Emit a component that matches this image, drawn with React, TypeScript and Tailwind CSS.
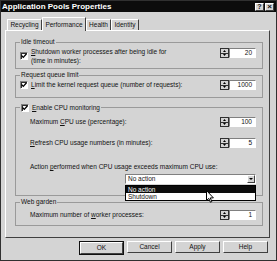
import type { ReactNode } from "react"

const raised = "border border-t-white border-l-white border-r-[#404040] border-b-[#404040]"
const sunken = "border border-t-[#808080] border-l-[#808080] border-r-white border-b-white"

const Check = () => (
    <span className={`w-[8px] h-[8px] shrink-0 bg-white flex items-center justify-center ${sunken} shadow-[inset_1px_1px_0_#303030]`}>
        <svg width="6" height="6" viewBox="0 0 6 6">
            <path d="M0.5 2.5 L2.3 4.4 L5.5 0.8" stroke="#000" strokeWidth="1.3" fill="none" />
        </svg>
    </span>
)

const Spin = ({ value, className = "" }: { value: string; className?: string }) => (
    <div className={`flex h-[10px] shrink-0 ${className}`}>
        <div className="w-[9px] flex flex-col border border-[#303030] bg-[#d4d4d4]">
            <div className="flex-1 flex items-center justify-center border-b border-[#303030]">
                <svg width="3" height="2" viewBox="0 0 3 2"><path d="M0 2 L1.5 0 L3 2Z" fill="#000" /></svg>
            </div>
            <div className="flex-1 flex items-center justify-center">
                <svg width="3" height="2" viewBox="0 0 3 2"><path d="M0 0 L1.5 2 L3 0Z" fill="#000" /></svg>
            </div>
        </div>
        <div className={`w-[27px] bg-white ${sunken} text-right pr-[3px] leading-[8px]`}>{value}</div>
    </div>
)

const Group = ({ legend, className, children }: { legend: ReactNode; className: string; children?: ReactNode }) => (
    <fieldset className={`border border-[#9a9a9a] pl-[4px] pr-[6px] w-[248px] ${className}`}>
        <legend className="px-[1px] leading-[8px]">{legend}</legend>
        {children}
    </fieldset>
)

const Btn = ({ label, primary }: { label: string; primary?: boolean }) => (
    <div className={primary ? "border border-[#101010]" : ""}>
        <div className={`${raised} h-[12px] ${primary ? "w-[43px]" : "w-[45px]"} flex items-center justify-center leading-none`}>{label}</div>
    </div>
)

export default function App() {
    return (
        <div className="w-[277px] h-[261px] bg-[#d4d4d4] border border-[#303030] flex flex-col font-['Liberation_Sans',Arial,sans-serif] text-[6.5px] text-[#111] relative overflow-hidden">
            {/* title bar */}
            <div className="h-[11px] bg-[#0c0c0c] flex items-center justify-between pl-[1px] pr-[2px]">
                <span className="text-white font-bold text-[8px] leading-none">Application Pools Properties</span>
                <div className="flex gap-[1px]">
                    <div className={`w-[9px] h-[8px] bg-[#d4d4d4] ${raised} flex items-center justify-center font-bold text-[7px] leading-none`}>?</div>
                    <div className={`w-[9px] h-[8px] bg-[#d4d4d4] ${raised} flex items-center justify-center font-bold text-[8px] leading-none`}>×</div>
                </div>
            </div>

            {/* tabs */}
            <div className="h-[18px] flex items-end pl-[6px] relative z-10">
                <div className={`w-[35px] h-[11px] ${raised} border-b-0 flex items-center justify-center`}>Recycling</div>
                <div className={`w-[44px] h-[14px] ${raised} border-b-0 bg-[#d4d4d4] -mb-[1px] flex items-start pt-[2px] justify-center`}>Performance</div>
                <div className={`w-[25px] h-[11px] ${raised} border-b-0 flex items-center justify-center`}>Health</div>
                <div className={`w-[28px] h-[11px] ${raised} border-b-0 flex items-center justify-center`}>Identity</div>
            </div>

            {/* panel */}
            <div className={`ml-[4px] w-[265px] h-[208px] ${raised} pl-[9px] pt-[7px] flex flex-col`}>
                <Group legend="Idle timeout" className="h-[31px]">
                    <div className="flex items-start justify-between">
                        <div className="flex items-center gap-[3px] mt-[1px]">
                            <Check />
                            <span className="leading-[9px]"><u>S</u>hutdown worker processes after being idle for<br />(time in minutes):</span>
                        </div>
                        <Spin value="20" className="mt-[2px]" />
                    </div>
                </Group>

                <Group legend="Request queue limit" className="h-[27px] mt-[2px]">
                    <div className="flex items-center justify-between mt-[1px]">
                        <div className="flex items-center gap-[3px]">
                            <Check />
                            <span><u>L</u>imit the kernel request queue (number of requests):</span>
                        </div>
                        <Spin value="1000" />
                    </div>
                </Group>

                <Group
                    legend={<span className="flex items-center gap-[3px] h-[9px]"><Check /><span><u>E</u>nable CPU monitoring</span></span>}
                    className="h-[93px] mt-[5px]"
                >
                    <div className="pl-[10px] flex flex-col">
                        <div className="flex items-center justify-between mt-[5px]">
                            <span>Maximum <u>C</u>PU use (percentage):</span>
                            <Spin value="100" />
                        </div>
                        <div className="flex items-center justify-between mt-[11px]">
                            <span><u>R</u>efresh CPU usage numbers (in minutes):</span>
                            <Spin value="5" />
                        </div>
                        <div className="mt-[15px] leading-[8px]">Action <u>p</u>erformed when CPU usage exceeds maximum CPU use:</div>
                        <div className={`mt-[3px] ml-[95px] w-[131px] h-[10px] bg-white ${sunken} flex items-center justify-between`}>
                            <span className="pl-[2px] leading-none">No action</span>
                            <div className={`w-[8px] h-[8px] bg-[#d4d4d4] ${raised} flex items-center justify-center`}>
                                <svg width="4" height="2" viewBox="0 0 4 2"><path d="M0 0 L2 2 L4 0Z" fill="#000" /></svg>
                            </div>
                        </div>
                    </div>
                </Group>

                <Group legend="Web garden" className="h-[28px] mt-[2px]">
                    <div className="pl-[10px] flex items-center justify-between mt-[4px]">
                        <span>Maximum number of <u>w</u>orker processes:</span>
                        <Spin value="1" />
                    </div>
                </Group>
            </div>

            {/* buttons */}
            <div className="mt-[3px] flex justify-end gap-[3px] pr-[8px]">
                <Btn label="OK" primary />
                <Btn label="Cancel" />
                <Btn label="Apply" />
                <Btn label="Help" />
            </div>

            {/* open dropdown list */}
            <div className="absolute left-[124px] top-[184px] w-[131px] border border-black bg-white flex flex-col z-20">
                <div className="h-[7px] bg-[#0c0c0c] text-white pl-[2px] leading-[7px]">No action</div>
                <div className="h-[7px] pl-[2px] leading-[7px]">Shutdown</div>
            </div>

            {/* mouse pointer */}
            <svg className="absolute left-[205px] top-[189px] z-30" width="8" height="13" viewBox="0 0 8 13">
                <path d="M0.5 0.5 L0.5 10.5 L2.8 8.4 L4.4 12.2 L5.8 11.6 L4.3 7.9 L7.4 7.9 Z" fill="#fff" stroke="#000" strokeWidth="1" />
            </svg>
        </div>
    )
}
